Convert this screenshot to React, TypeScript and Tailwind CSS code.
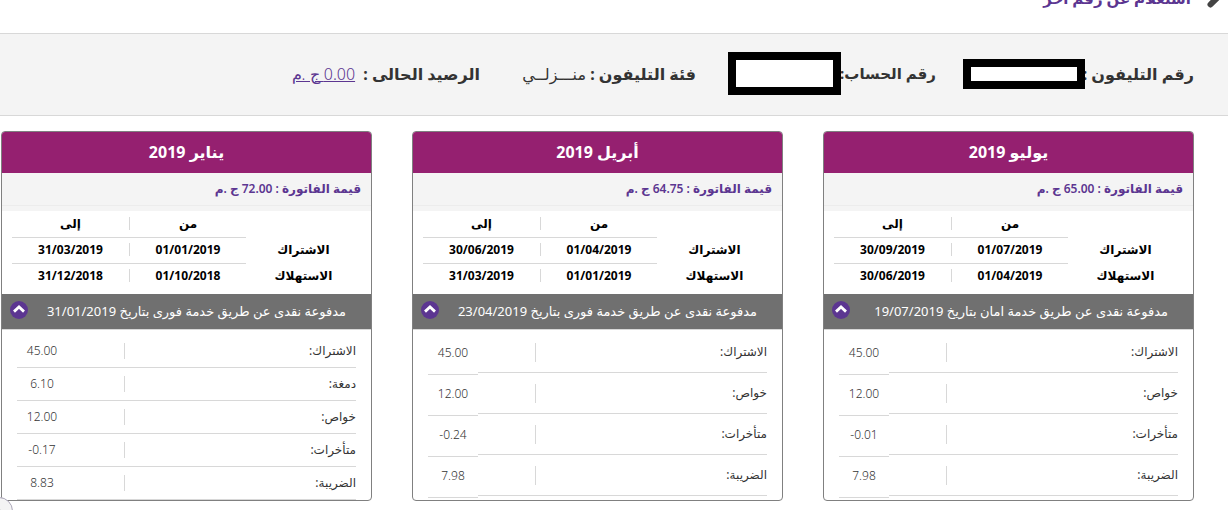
import { useState } from "react";

interface Period {
  label: string;
  from: string;
  to: string;
}

interface Bill {
  id: number;
  month: string;
  total: string;
  periods: Period[];
  status: string;
  paidAt: string;
  compact?: boolean;
  items: [string, string][];
}

const bills: Bill[] = [
  {
    id: 1,
    month: "يوليو 2019",
    total: "65.00",
    periods: [
      { label: "الاشتراك", from: "01/07/2019", to: "30/09/2019" },
      { label: "الاستهلاك", from: "01/04/2019", to: "30/06/2019" },
    ],
    status: "مدفوعة نقدى عن طريق خدمة امان بتاريخ",
    paidAt: "19/07/2019",
    items: [
      ["الاشتراك:", "45.00"],
      ["خواص:", "12.00"],
      ["متأخرات:", "-0.01"],
      ["الضريبة:", "7.98"],
    ],
  },
  {
    id: 2,
    month: "أبريل 2019",
    total: "64.75",
    periods: [
      { label: "الاشتراك", from: "01/04/2019", to: "30/06/2019" },
      { label: "الاستهلاك", from: "01/01/2019", to: "31/03/2019" },
    ],
    status: "مدفوعة نقدى عن طريق خدمة فورى بتاريخ",
    paidAt: "23/04/2019",
    items: [
      ["الاشتراك:", "45.00"],
      ["خواص:", "12.00"],
      ["متأخرات:", "-0.24"],
      ["الضريبة:", "7.98"],
    ],
  },
  {
    id: 3,
    month: "يناير 2019",
    total: "72.00",
    periods: [
      { label: "الاشتراك", from: "01/01/2019", to: "31/03/2019" },
      { label: "الاستهلاك", from: "01/10/2018", to: "31/12/2018" },
    ],
    status: "مدفوعة نقدى عن طريق خدمة فورى بتاريخ",
    paidAt: "31/01/2019",
    compact: true,
    items: [
      ["الاشتراك:", "45.00"],
      ["دمغة:", "6.10"],
      ["خواص:", "12.00"],
      ["متأخرات:", "-0.17"],
      ["الضريبة:", "8.83"],
    ],
  },
];

const Divider = () => <span className="h-[13px] w-px bg-[#d8d8d8]" />;

const BillCard = ({ bill }: { bill: Bill }) => {
  const [open, setOpen] = useState<boolean>(true);

  return (
    <article className="overflow-hidden rounded border border-[#808080] bg-white">
      <h2 className="h-[41px] bg-[#952070] text-center text-[16px] leading-[41px] font-bold text-white">
        {bill.month}
      </h2>
      <div className="border-b-[5px] border-[#f4f4f4]">
        <p className="h-[33px] border-b border-[#ececec] bg-[#f4f4f4] px-[10px] text-[12px] leading-[32px] font-semibold text-[#5c3691]">
          قيمة الفاتورة : {bill.total} ج .م
        </p>
      </div>

      {/* Billing periods */}
      <div className="px-[10px] pb-[5px]">
        <table className="w-full table-fixed text-center text-[12px] leading-6 font-bold text-black">
          <thead>
            <tr className="h-[26px]">
              <td />
              <th className="w-[116px]">من</th>
              <th className="w-[118px]">
                <div className="flex items-center">
                  <Divider />
                  <span className="flex-1">إلى</span>
                </div>
              </th>
            </tr>
          </thead>
          <tbody>
            {bill.periods.map((period) => (
              <tr key={period.label} className="h-[26px] align-top">
                <th className="align-middle">{period.label}</th>
                <td className="border-t border-[#d8d8d8]">{period.from}</td>
                <td className="border-t border-[#d8d8d8]">
                  <div className="flex items-center">
                    <Divider />
                    <span className="flex-1">{period.to}</span>
                  </div>
                </td>
              </tr>
            ))}
          </tbody>
        </table>
      </div>

      {/* Payment status */}
      <div className="flex h-9 items-center justify-between border-b border-[#d8d8d8] bg-[#707070] ps-[25px] pe-2 text-[13px] text-white">
        <span>
          {bill.status} {bill.paidAt}
        </span>
        <button
          type="button"
          aria-label="التفاصيل"
          aria-expanded={open}
          onClick={() => setOpen(!open)}
          className="mb-[3px] flex size-[18px] items-center justify-center rounded-full bg-[#5c3691]"
        >
          <svg viewBox="0 0 18 18" className="size-[18px]" fill="none" stroke="#fff" strokeWidth="2.8">
            <path d="M4 10.6 9 6l5 4.6" />
          </svg>
        </button>
      </div>

      {/* Bill items */}
      {open && (
        <div className={bill.compact ? "px-[15px] pt-[5px]" : "px-[15px] pt-[2px] pb-1"}>
          <table className="block text-[12px] text-[#333]">
            <tbody className="block">
              {bill.items.map(([label, value]) => (
                <tr key={label} className={bill.compact ? "flex h-[33px]" : "flex h-[41px]"}>
                  <th className="flex flex-1 items-center justify-between border-b border-[#d8d8d8] text-start font-normal">
                    {label}
                    <span
                      className={
                        bill.compact ? "me-[57px] h-4 w-px bg-[#d8d8d8]" : "me-[57px] h-[19px] w-px bg-[#d8d8d8]"
                      }
                    />
                  </th>
                  <td
                    className={
                      bill.compact
                        ? "flex w-[50px] items-center justify-center border-b border-[#d8d8d8] font-light"
                        : "flex h-[43px] w-[50px] items-center justify-center border-b border-[#d8d8d8] font-light"
                    }
                  >
                    <bdi dir="ltr">{value}</bdi>
                  </td>
                </tr>
              ))}
            </tbody>
          </table>
        </div>
      )}
    </article>
  );
};

const App = () => {
  return (
    <div dir="rtl" className="h-screen overflow-hidden bg-white font-['Noto_Sans','DejaVu_Sans',sans-serif]">
      <header className="flex h-[33px] items-start gap-4 ps-[7px]">
        <svg viewBox="0 0 14 24" className="-mt-4 h-6 w-[14px]" fill="none">
          <path d="M3.5 20.5 16 8" stroke="#444" strokeWidth="6" strokeLinecap="round" />
        </svg>
        <a href="#" className="-mt-[14px] text-[15px] leading-6 font-bold text-[#5c3691]">
          استعلام عن رقم آخر
        </a>
      </header>

      {/* Account info */}
      <section className="flex h-[83px] items-center border-y border-[#d8d8d8] bg-[#f4f4f4] ps-[34px] pb-[2px] text-[16px] font-bold whitespace-nowrap text-[#333]">
        <div className="flex w-[231px] items-center">
          <span className="w-0 flex-1">رقم التليفون :</span>
          <span className="h-[30px] w-[122px] shrink-0 border-8 border-black bg-white" />
        </div>
        <div className="ms-[27px] flex w-[208px] items-center text-[15px]">
          <span className="w-0 flex-1">رقم الحساب:</span>
          <span className="h-[43px] w-[113px] shrink-0 border-8 border-black bg-white" />
        </div>
        <div className="ms-8 w-[170px]">
          فئة التليفون : <span className="font-normal">منـــزلــي</span>
        </div>
        <div className="ms-[46px]">
          الرصيد الحالى :{" "}
          <a href="#" className="ms-1 font-light text-[#5c3691] underline">
            0.00 ج .م
          </a>
        </div>
      </section>

      <main className="mt-[15px] grid grid-cols-3 items-stretch gap-10 ps-[34px] pe-px">
        {bills.map((bill) => (
          <BillCard key={bill.id} bill={bill} />
        ))}
      </main>

      <button
        type="button"
        aria-label="المزيد"
        className="fixed -bottom-[15px] -left-[15px] flex size-7 items-center justify-center rounded-full border border-[#aaa5b8] bg-[#f4f4f4]"
      >
        <svg viewBox="0 0 10 10" className="size-[10px]" fill="#333">
          <path d="M5 2 9 8H1z" />
        </svg>
      </button>
    </div>
  );
};

export default App;
